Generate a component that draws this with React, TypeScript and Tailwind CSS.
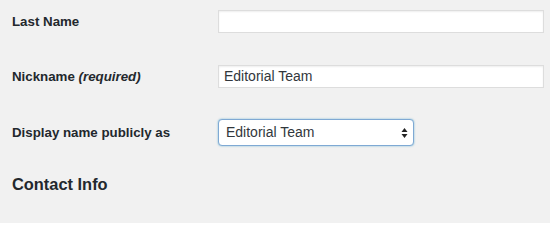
import React from "react";

export default function App() {
  return (
    <div className="w-[550px] h-[223px] bg-[#f1f1f1] pl-[12px] text-[#23282d] overflow-hidden" style={{ fontFamily: '"Liberation Sans", Arial, sans-serif' }}>
      <div className="flex items-center h-[43px]">
        <div className="w-[206px] text-[13.3px] font-bold pt-[1px]">Last Name</div>
        <div className="w-[326px] h-[23px] bg-white border border-[#dddddd] shadow-[inset_0_1px_2px_rgba(0,0,0,0.07)]"></div>
      </div>
      <div className="flex items-center h-[43px] mt-[12px]">
        <div className="w-[206px] text-[13.3px] font-bold pt-[1px]">
          Nickname <span className="italic">(required)</span>
        </div>
        <div className="w-[326px] h-[23px] bg-white border border-[#dddddd] shadow-[inset_0_1px_2px_rgba(0,0,0,0.07)] flex items-center pl-[5px] text-[14px] text-[#32373c]">
          Editorial Team
        </div>
      </div>
      <div className="flex items-center h-[43px] mt-[13px]">
        <div className="w-[206px] text-[13.3px] font-bold pt-[1px]">Display name publicly as</div>
        <div className="w-[196px] h-[27px] bg-white border border-[#7fa9d4] rounded-[4px] shadow-[0_0_2px_rgba(30,140,190,0.6)] flex items-center justify-between pl-[7px] pr-[5px] text-[14px] text-[#32373c]">
          <span>Editorial Team</span>
          <svg width="7" height="12" viewBox="0 0 7 12">
            <polygon points="3.5,1 6.5,5 0.5,5" fill="#222" />
            <polygon points="0.5,7 6.5,7 3.5,11" fill="#222" />
          </svg>
        </div>
      </div>
      <div className="mt-[20px] text-[16.4px] font-bold leading-[20px]">Contact Info</div>
    </div>
  );
}
